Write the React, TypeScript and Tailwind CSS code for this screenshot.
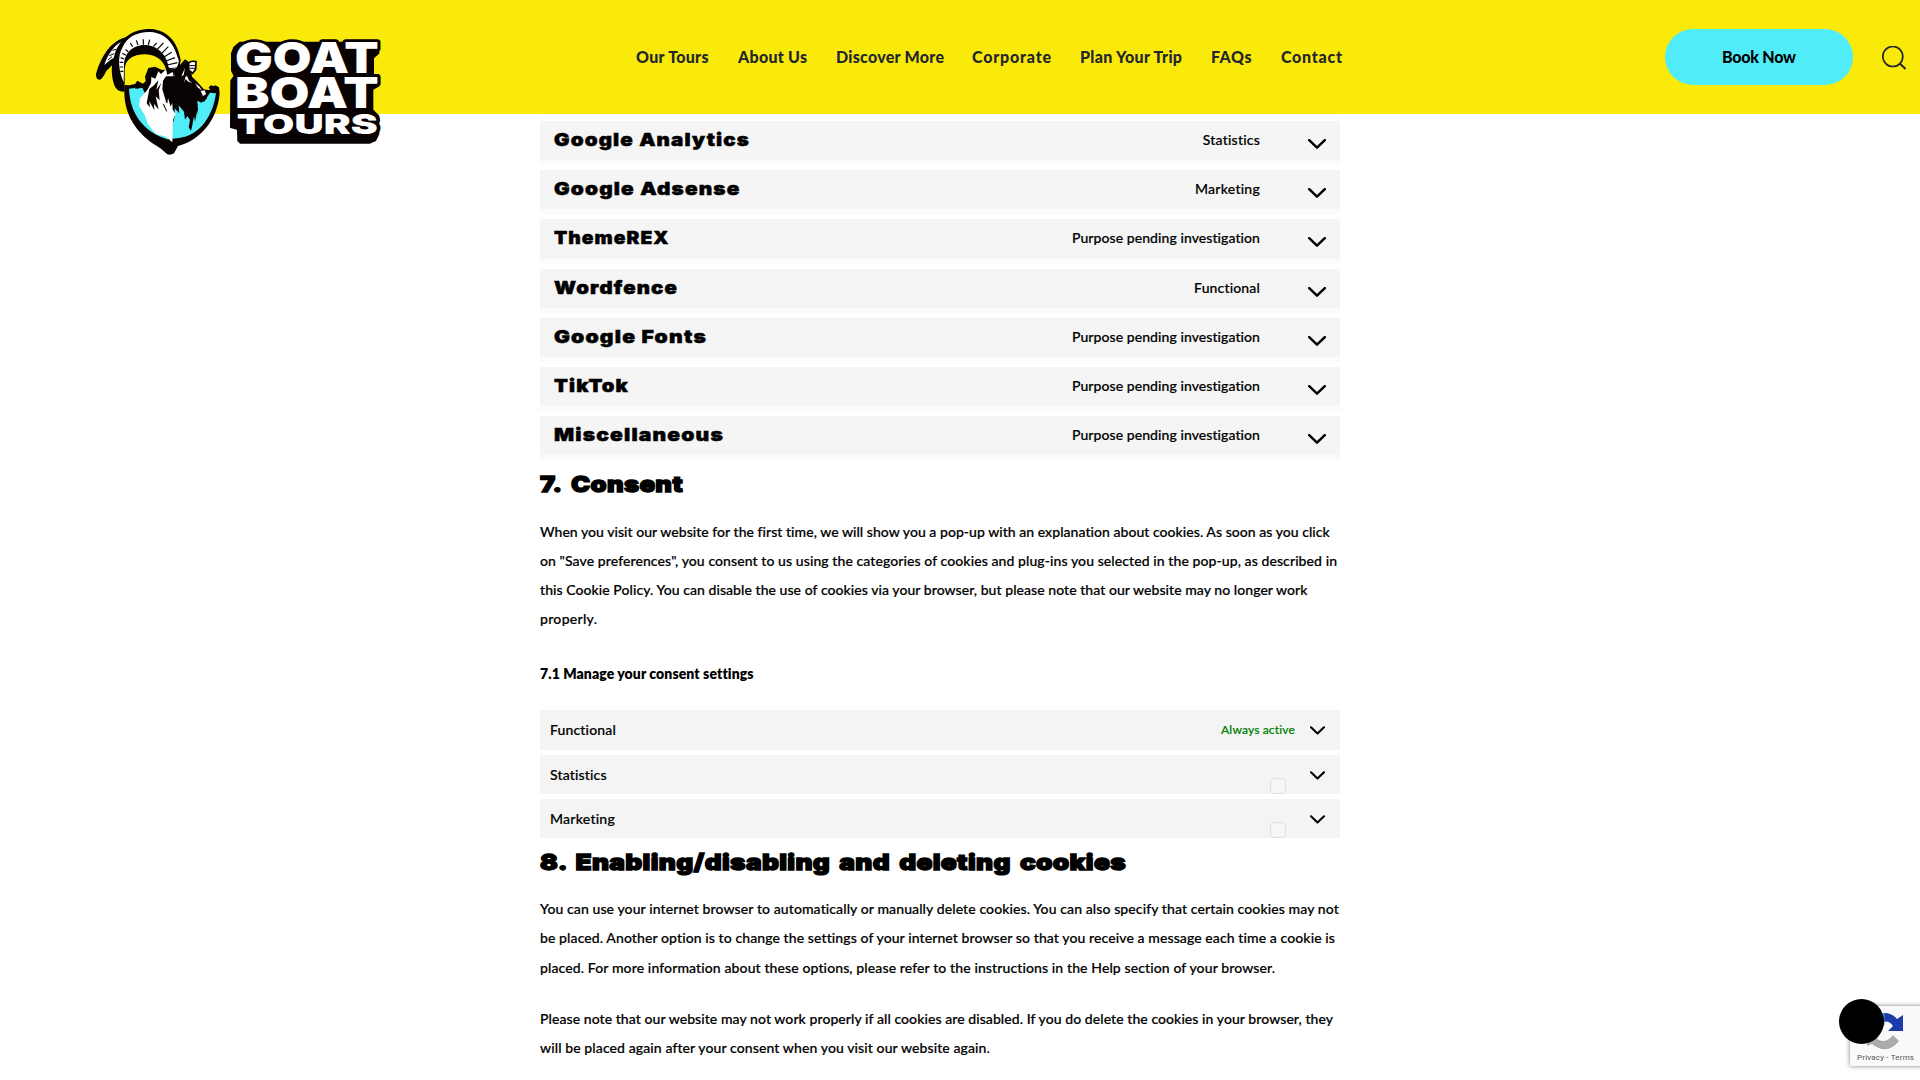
import { useLayoutEffect, useRef, useState } from "react";

type FitProps = { text: string; width: number; className?: string; stretch?: boolean };

/** A single line of text, tracked or stretched so that it fills the given width. */
function Fit({ text, width, className = "", stretch = false }: FitProps) {
  const ref = useRef<HTMLSpanElement>(null);
  const [natural, setNatural] = useState(0);
  useLayoutEffect(() => {
    if (ref.current && !natural) setNatural(ref.current.getBoundingClientRect().width);
  }, [natural]);
  const style = !natural
    ? undefined
    : stretch
      ? { transform: `scaleX(${width / natural})` }
      : { letterSpacing: `${(width - natural) / (text.length - 1)}px` };
  return (
    <span ref={ref} style={style} className={`inline-block origin-left whitespace-nowrap ${className}`}>
      {text}
    </span>
  );
}

const nav: [string, number, string][] = [
  ["Our Tours", 72.5, "w-[102px]"],
  ["About Us", 69, "w-[98px]"],
  ["Discover More", 108, "w-[136px]"],
  ["Corporate", 79, "w-[108px]"],
  ["Plan Your Trip", 102, "w-[131px]"],
  ["FAQs", 40.5, "w-[70px]"],
  ["Contact", 61, "w-[61px]"],
];

const services: [string, number, string, number, string][] = [
  ["Google Analytics", 196, "Statistics", 57.5, "h-[39px]"],
  ["Google Adsense", 186.5, "Marketing", 65, "h-[39px]"],
  ["ThemeREX", 115.5, "Purpose pending investigation", 188.5, "h-[40px]"],
  ["Wordfence", 124, "Functional", 66, "h-[39px]"],
  ["Google Fonts", 153, "Purpose pending investigation", 188.5, "h-[39px]"],
  ["TikTok", 75, "Purpose pending investigation", 188.5, "h-[39px]"],
  ["Miscellaneous", 170, "Purpose pending investigation", 188.5, "h-[39px]"],
];

const consentLines: [string, number][] = [
  ["When you visit our website for the first time, we will show you a pop-up with an explanation about cookies. As soon as you click", 790],
  ["on \"Save preferences\", you consent to us using the categories of cookies and plug-ins you selected in the pop-up, as described in", 797],
  ["this Cookie Policy. You can disable the use of cookies via your browser, but please note that our website may no longer work", 767.5],
  ["properly.", 57],
];
const deleteLines: [string, number][] = [
  ["You can use your internet browser to automatically or manually delete cookies. You can also specify that certain cookies may not", 799],
  ["be placed. Another option is to change the settings of your internet browser so that you receive a message each time a cookie is", 795],
  ["placed. For more information about these options, please refer to the instructions in the Help section of your browser.", 736],
];
const noteLines: [string, number][] = [
  ["Please note that our website may not work properly if all cookies are disabled. If you do delete the cookies in your browser, they", 793],
  ["will be placed again after your consent when you visit our website again.", 449.5],
];

function Lines({ lines, className }: { lines: [string, number][]; className: string }) {
  return (
    <p className={`flex flex-col items-start text-[14px] font-medium [-webkit-text-stroke:0.2px_#000] ${className}`}>
      {lines.map(([t, w]) => (
        <Fit key={t} text={t} width={w} />
      ))}
    </p>
  );
}

function Chevron({ className }: { className: string }) {
  return (
    <svg viewBox="0 0 18 10" className={className} fill="none" stroke="#000" strokeWidth="2.5" strokeLinecap="round" strokeLinejoin="round">
      <path d="M1.2 1.2 9 8.6l7.8-7.4" />
    </svg>
  );
}

const words: [string, number, number, number, number][] = [
  ["GOAT", 465, 190, 128, 431],
  ["BOAT", 465, 295, 128, 431],
  ["TOURS", 470, 372, 83, 423],
];

function Logo() {
  return (
    <svg viewBox="0 0 960 480" className="absolute top-[10px] left-[80px] h-[160px] w-[320px]">
      {/* shield */}
      <path d="M134 225C128 290 150 350 215 398L240 414 262 433Q271 437 282 430L294 408C360 392 412 332 419 250L417 232 405 226 388 240 300 230 200 212 190 222 172 212 165 222 147 226Z" fill="#080203" />
      <path d="M147 236 165 234 177 228 188 232 205 230 330 240 372 276 390 248 408 250C400 310 365 378 292 385L262 388C190 365 150 310 147 236Z" fill="#50edf9" />
      {/* rear horn */}
      <path d="M150 80C105 82 67 125 48 192Q47 210 60 209 68 206 79 183L112 150 150 96Z" fill="#080203" />
      <path d="M138 91C108 97 84 130 73 165L92 149 112 138 130 104Z" fill="#fff" />
      <path d="M84 150l12-10M88 137l14-6M97 121l12-3" stroke="#080203" strokeWidth="3" />
      {/* front horn */}
      <path d="M134 245Q108 246 102 223C93 195 93 165 102 140 115 86 158 56 213 57 263 61 292 94 302 150L296 190 262 196C258 155 232 134 196 133 157 133 135 150 134 178Z" fill="#080203" />
      <path d="M131 217C115 180 112 140 127 113 141 80 172 65 211 66 262 69 283 107 294 145 302 155 288 185 276 181L265 170C262 137 233 105 193 105 157 105 131 131 132 170Z" fill="#fff" />
      <path d="M121 184h9M119 171h11M119 157h11M122 143l11 4M127 130l11 6M137 118l8 8M151 99l7 11M169 91l5 14M190 88v16M209 89l-4 16M230 99l-10 10M250 99l-19 20M265 110l-20 20M275 127l-23 14M285 143l-27 10M292 158l-30 7M284 174l-18 3" stroke="#080203" strokeWidth="3.5" />
      {/* face */}
      <path d="M195 200 205 174 225 170 246 180 290 176 315 148 330 158 336 200 352 216 365 230 382 250 380 266 364 278 352 272 354 300 350 316 352 300 345 335 342 318 337 345 333 363 326 352 330 330 322 318 315 329 312 305 296 286 298 310 284 295 284 320 276 350 220 300 186 232 198 218Z" fill="#080203" />
      <path d="M326 160Q330 151 348 155L347 178 338 190 326 180Z" fill="#fff" stroke="#080203" strokeWidth="5" />
      <path d="M328 167h18M328 175h17" stroke="#080203" strokeWidth="3" />
      {/* mane */}
      <path d="M214 201 226 206 235 184 243 192 258 178 262 195 277 186 285 199 258 199 249 212 247 238 254 262 262 281 264 264 272 290 277 278 278 299 287 312 279 330 277 397 258 380 227 372 204 343 193 313 177 288 180 265 202 240 213 219Z" fill="#fff" />
      <path d="M208 237 200 280 210 292 208 273 223 301 222 281 236 299 227 259 239 271 236 241 244 218 229 240 235 211 222 226Z" fill="#080203" />
      <path d="M257 244l2 34M250 282l10 22M288 172l-8 28M303 173l-9 24" stroke="#080203" strokeWidth="3" />
      <path d="M312 219 316 202 321 197 327 212 337 219 325 215 317 207ZM345 220l14 10 7 12-13-10ZM362 243l12-2 4 11-9 6ZM315 173l-11 26 7-4Z" fill="#fff" />
      <path d="M165 237 174 220 185 224 201 211 197 232ZM386 232 393 226 402 229 414 230 415 246 402 250 392 242Z" fill="#080203" />
      {/* wordmark */}
      <path d="M480 97 462 112 455 130 455 182 463 198 453 212 452 352 473 358 474 392 481 399 870 399 887 391 896 372 896 318 878 300 878 238 896 228 896 194 880 194 880 144 896 130 896 97Z" fill="#080203" stroke="#080203" strokeWidth="4" strokeLinejoin="round" />
      <g fontFamily="Inter" fontWeight="900" fill="#fff" stroke="#080203" strokeWidth="16" strokeLinejoin="round" className="[paint-order:stroke]">
        {words.map(([w, x, y, s, l]) => (
          <text key={w} x={x} y={y} fontSize={s} textLength={l} lengthAdjust="spacingAndGlyphs">{w}</text>
        ))}
      </g>
    </svg>
  );
}

export default function App() {
  return (
    <div className="relative h-[1080px] w-[1920px] overflow-hidden bg-white font-['Lato',sans-serif] text-black">
      <header className="relative flex h-[114px] items-center bg-[#f9ea0a]">
        <Logo />
        <nav className="ml-[636px] flex w-[1029px] text-[16px] leading-6 font-black text-[#24262b]">
          {nav.map(([t, w, cls]) => (
            <a key={t} className={`shrink-0 ${cls}`}>
              <Fit text={t} width={w} />
            </a>
          ))}
        </nav>
        <button className="flex h-[56px] w-[188px] items-center rounded-full bg-[#50edf9] pl-[57px] text-[16px] font-black">
          <Fit text="Book Now" width={74} />
        </button>
        <svg viewBox="0 0 24 24" className="mt-[2px] ml-[29px] h-6 w-6" fill="none" stroke="#24262b" strokeWidth="1.7">
          <circle cx="10.8" cy="10.5" r="10" />
          <path d="m18 17.8 5.6 5.2" strokeWidth="2" />
        </svg>
      </header>

      <main className="ml-[540px] flex w-[800px] flex-col">
        <div className="mb-[5px] h-[2px] bg-[#fbfbfb]" />
        {services.map(([name, nw, purpose, pw, h]) => (
          <div key={name} className="mb-[5px] border-b-[5px] border-[#fbfbfb]">
            <div className={`flex items-start bg-[#f5f5f5] pr-[14px] pl-[14px] ${h}`}>
              <h4 className="flex-1 font-['Inter',sans-serif] text-[18px] leading-[37px] font-black tracking-[1px] [-webkit-text-stroke:0.5px_#000]">
                <Fit text={name} width={nw} stretch />
              </h4>
              <span className="mr-[48px] text-[14px] leading-[38px] font-medium [-webkit-text-stroke:0.2px_#000]">
                <Fit text={purpose} width={pw} />
              </span>
              <Chevron className="mt-[17.5px] h-[10px] w-[18px]" />
            </div>
          </div>
        ))}

        <h2 className="h-[40px] font-['Inter',sans-serif] text-[22px] leading-[39px] font-black tracking-[0.3px] [word-spacing:4px] [-webkit-text-stroke:1.3px_#000]">
          <Fit text="7. Consent" width={143} stretch />
        </h2>
        <Lines lines={consentLines} className="mt-[12px] leading-[29px]" />
        <p className="mt-[26px] h-[29px] text-[14px] leading-[29px] font-extrabold">
          <Fit text="7.1 Manage your consent settings" width={213} />
        </p>
        <div className="mt-[22px] flex flex-col gap-[5px] text-[14px] font-medium">
          <div className="flex h-[40px] items-center bg-[#f4f4f4] pr-[15px] pl-[10px]">
            <span className="flex-1 pb-[2px] [-webkit-text-stroke:0.2px_#000]"><Fit text="Functional" width={66} /></span>
            <span className="mr-[15px] text-[12px] text-[#008000] [-webkit-text-stroke:0.2px_#008000]"><Fit text="Always active" width={74} /></span>
            <Chevron className="mt-[1px] h-[9px] w-[15px]" />
          </div>
          {([["Statistics", 57], ["Marketing", 65]] as [string, number][]).map(([t, w]) => (
            <div key={t} className="flex h-[39px] items-center bg-[#f4f4f4] pr-[15px] pl-[10px]">
              <span className="flex-1 pb-[1px] [-webkit-text-stroke:0.2px_#000]"><Fit text={t} width={w} /></span>
              <span className="mr-[24px] h-4 w-4 self-end rounded-[4px] border border-[#dfdfdf] bg-[#f6f6f6]" />
              <Chevron className="mt-[1px] h-[9px] w-[15px]" />
            </div>
          ))}
        </div>
        <h2 className="mt-[5px] h-[40px] font-['Inter',sans-serif] text-[22px] leading-[39px] font-black tracking-[0.3px] [word-spacing:3px] [-webkit-text-stroke:1.3px_#000]">
          <Fit text="8. Enabling/disabling and deleting cookies" width={586} stretch />
        </h2>
        <Lines lines={deleteLines} className="mt-[11px] leading-[29.4px]" />
        <Lines lines={noteLines} className="mt-[22px] leading-[29px]" />
      </main>

      <div className="absolute top-[1006px] left-[1850px] h-[60px] w-[256px] rounded-[2px] bg-[#f9f9f9] shadow-[0_0_5px_#808080]">
        <svg viewBox="0 0 70 60" className="absolute top-0 left-0 h-[60px] w-[70px]">
          <path d="M34 7Q42 7 47 13L53 9V25H38L43 20Q39 14 34 16Z" fill="#1c3aa9" />
          <path d="M26 9Q30 7 34.5 7V19L26 22Z" fill="#4285f4" />
          <path d="M17 24 25 31Q34 40 43 29L49 35Q37 50 22 38L17 40Z" fill="#ababab" />
        </svg>
        <div className="absolute top-[46px] left-[7px] font-['Roboto',sans-serif] text-[8px] leading-[12px] text-[#555]">
          <Fit text="Privacy - Terms" width={57} />
        </div>
      </div>
      <div className="absolute top-[999px] left-[1839px] h-[45px] w-[45px] rounded-full bg-black" />
    </div>
  );
}
